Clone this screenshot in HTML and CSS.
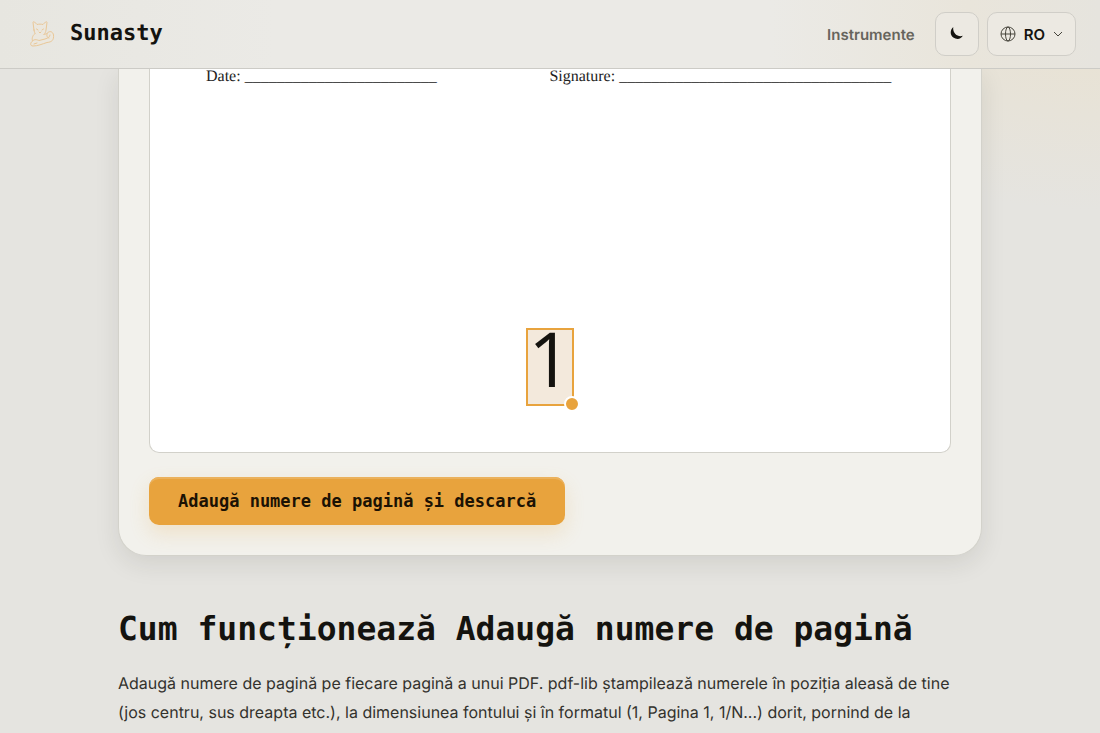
FILE: index.html
```
<!DOCTYPE html>
<html lang="ro">
<head>
    <meta charset="UTF-8">
    <meta name="viewport" content="width=device-width, initial-scale=1.0">
    <title>Adaugă numere de pagină | Sunasty</title>
    <link rel="stylesheet" href="styles.css">
</head>
<body>
    <header class="site-header">
        <a class="brand" href="#">
            <svg class="brand-logo" viewBox="0 0 36 36" aria-hidden="true">
                <path d="M10 14L9 6.500C9 5.500 10 5.500 10.500 6L13 8.500C15 8 17 8 19 8.500L21.500 6C22 5.500 23 5.500 23 6.500L22 14C21.500 18 19 20 16 20C12.500 20 10.500 18 10 14Z"/>
                <path d="M10.500 18C8 20 8 23 8.500 25C6 27 6 30 9 30C14 30 18 28 23 26.500C28 26 30 24 29.500 19C29 15.500 25.500 14.500 23.500 17C22 18 21 18.500 20 18.500"/>
                <path d="M8.500 25C11 22.500 13 24 15 24.500L21 23C24 22 26 21 26 19M23.500 17C22 19 23 22 25 22M10 28L13 27M12.500 13L14 14M19.500 13L18 14M15 16L16 17L17 16"/>
            </svg>
            <span>Sunasty</span>
        </a>
        <nav class="site-nav">
            <a class="nav-link" href="#">Instrumente</a>
            <button class="tool-button theme-button" type="button" aria-label="Temă întunecată">
                <svg width="14" height="14" viewBox="0 0 14 14" aria-hidden="true">
                    <path fill="currentColor" d="M3.300 0C-.2 3-.1 8.300 3.300 10.600c3.400 2.400 7.900 1.600 9.500-1.800C7.500 10.500 2.300 6 3.300 0z"/>
                </svg>
            </button>
            <button class="tool-button lang-button" type="button">
                <svg class="line-icon" width="16" height="16" viewBox="0 0 16 16" aria-hidden="true">
                    <circle cx="8" cy="8" r="7"/>
                    <ellipse cx="8" cy="8" rx="2.500" ry="7"/>
                    <path d="M1 8h14"/>
                </svg>
                <span>RO</span>
                <svg class="line-icon" width="10" height="10" viewBox="0 0 10 10" aria-hidden="true">
                    <path d="M1 3l4 4 4-4"/>
                </svg>
            </button>
        </nav>
    </header>

    <main class="container">
        <section class="card">
            <div class="paper">
                <div class="signatures">
                    <span>Date: ________________________</span>
                    <span>Signature: __________________________________</span>
                </div>
                <div class="page-number">1<span class="resize-handle"></span></div>
            </div>
            <button class="download-button" type="button">Adaugă numere de pagină și descarcă</button>
        </section>

        <section class="about">
            <h2>Cum funcționează Adaugă numere de pagină</h2>
            <p>Adaugă numere de pagină pe fiecare pagină a unui PDF. pdf-lib ștampilează numerele în poziția aleasă de tine<br>(jos centru, sus dreapta etc.), la dimensiunea fontului și în formatul (1, Pagina 1, 1/N...) dorit, pornind de la</p>
        </section>
    </main>
</body>
</html>
```
FILE: styles.css
```
* {
    box-sizing: border-box;
}

body {
    margin: 0;
    min-height: 100vh;
    font-family: Inter, sans-serif;
    text-rendering: geometricPrecision;
    color: #14130f;
    background: radial-gradient(ellipse 360px 190px at 100% 20px, #e9e2d2, transparent) no-repeat, #e5e4e0;
}

.site-header {
    position: sticky;
    top: 0;
    z-index: 2;
    display: flex;
    align-items: center;
    justify-content: space-between;
    padding: 12px 24px;
    border-bottom: 1px solid #cccbc6;
    background: linear-gradient(90deg, #e7e6e0, #ebeae6 25%, #ebeae6 70%, #e9e5db 88%, #e6e4de);
}

.brand {
    display: flex;
    align-items: center;
    gap: 10px;
    color: inherit;
    font-family: "DejaVu Sans Mono", monospace;
    font-size: 22px;
    font-weight: bold;
    line-height: 28px;
    text-decoration: none;
}

.brand-logo {
    width: 36px;
    height: 36px;
    fill: #ebe7de;
    stroke: #e9c797;
    stroke-width: 1;
    stroke-linecap: round;
    stroke-linejoin: round;
}

.site-nav {
    display: flex;
    align-items: center;
    gap: 8px;
}

.nav-link {
    margin-right: 12px;
    color: #66645c;
    font-size: 15px;
    font-weight: 600;
    text-decoration: none;
}

.tool-button {
    display: flex;
    align-items: center;
    justify-content: center;
    gap: 8px;
    height: 44px;
    padding: 0 12px;
    border: 1px solid #d0cec8;
    border-radius: 10px;
    background: #ece9e2;
    color: #14130f;
    font-family: inherit;
    font-size: 15px;
    font-weight: 600;
    cursor: pointer;
}

.theme-button {
    width: 44px;
}

.line-icon {
    fill: none;
    stroke: #46443b;
    stroke-width: 1;
}

.container {
    max-width: 912px;
    margin: 0 auto;
    padding: 0 24px;
}

.card {
    padding: 0 30px 30px;
    border: 1px solid #d3d2cb;
    border-top: 0;
    border-radius: 0 0 28px 28px;
    background: #f2f1ec;
    box-shadow: 0 8px 24px rgba(40, 38, 25, 0.1);
}

.paper {
    display: flex;
    flex-direction: column;
    align-items: center;
    padding-bottom: 46px;
    border: 1px solid #d2d1ca;
    border-top: 0;
    border-radius: 0 0 10px 10px;
    background: #fff;
}

.signatures {
    display: grid;
    grid-template-columns: 6fr 7fr;
    align-self: stretch;
    padding-left: 56px;
    margin-bottom: 244px;
    color: #222;
    font-family: "Liberation Serif", serif;
    font-size: 16px;
    line-height: 15px;
    white-space: nowrap;
}

.page-number {
    position: relative;
    width: 48px;
    height: 78px;
    border: 2px solid #e8a33d;
    background: #f3e9dc;
    font-family: "Open Sans", sans-serif;
    font-size: 76px;
    line-height: 58px;
    text-align: center;
}

.resize-handle {
    position: absolute;
    right: -8px;
    bottom: -8px;
    width: 16px;
    height: 16px;
    border: 2px solid #fff;
    border-radius: 50%;
    background: #e8a33d;
}

.download-button {
    display: block;
    height: 48px;
    margin-top: 24px;
    padding: 0 29px;
    border: 0;
    border-radius: 10px;
    background: #e8a33d;
    box-shadow: inset 0 2px 0 #ebb15c, 0 8px 20px rgba(232, 163, 61, 0.2);
    color: #1b1204;
    font-family: "DejaVu Sans Mono", monospace;
    font-size: 17px;
    font-weight: bold;
    cursor: pointer;
}

.about h2 {
    margin: 53px 0 20px;
    font-family: "DejaVu Sans Mono", monospace;
    font-size: 33px;
    line-height: 40px;
}

.about p {
    margin: 0;
    color: #33322d;
    font-size: 16px;
    line-height: 29px;
}
```
